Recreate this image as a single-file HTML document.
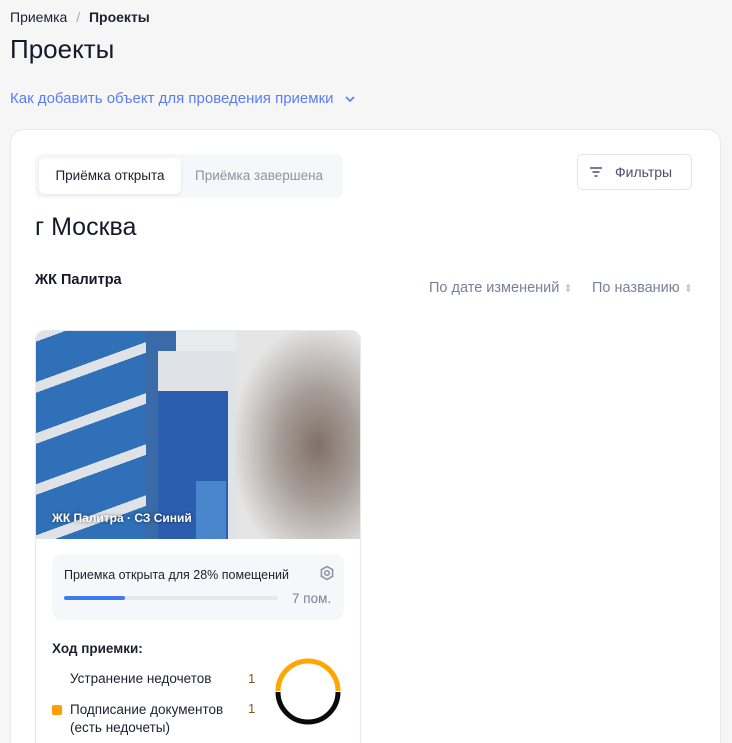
<!DOCTYPE html>
<html><head><meta charset="utf-8"><style>
*{box-sizing:border-box;margin:0;padding:0}
html,body{width:732px;height:743px;overflow:hidden}
body{background:#f6f6f7;font-family:"Liberation Sans","DejaVu Sans",sans-serif;color:#1c2030;position:relative}
.a{position:absolute;white-space:nowrap}
</style></head><body>
<div class="a" style="left:10px;top:9px;font-size:14px;color:#1c2030">Приемка <span style="color:#aab;margin:0 5px">/</span> <b>Проекты</b></div>
<div class="a" style="left:10px;top:34px;font-size:26px;color:#15192a">Проекты</div>
<div class="a" style="left:10px;top:90px;font-size:15px;color:#5b7cf5">Как добавить объект для проведения приемки <svg width="12" height="8" style="margin-left:6px" viewBox="0 0 12 8"><path d="M2 2l4 4 4-4" stroke="#5b7cf5" stroke-width="1.6" fill="none"/></svg></div>
<div class="a" style="left:10px;top:129px;width:711px;height:640px;background:#fff;border:1px solid #e8e9ef;border-radius:14px"></div>
<div class="a" style="left:35px;top:154px;width:308px;height:44px;background:#f6f7fb;border-radius:6px"></div>
<div class="a" style="left:39px;top:158px;width:142px;height:36px;background:#fff;border-radius:6px;box-shadow:0 1px 3px rgba(0,0,0,.08);font-size:13.5px;line-height:36px;text-align:center;color:#1c2030">Приёмка открыта</div>
<div class="a" style="left:195px;top:158px;line-height:36px;font-size:13.5px;color:#8f93a3">Приёмка завершена</div>
<div class="a" style="left:577px;top:154px;width:115px;height:36px;border:1px solid #e2e4ec;border-radius:5px;font-size:14px;line-height:34px;color:#4a5068;padding-left:37px">Фильтры</div>
<svg class="a" style="left:589px;top:166px" width="14" height="12" viewBox="0 0 14 12"><path d="M1 2h12M3.5 6h7M5.5 10h3" stroke="#4a5068" stroke-width="1.5"/></svg>
<div class="a" style="left:35px;top:213px;font-size:25px;color:#15192a">г Москва</div>
<div class="a" style="left:35px;top:272px;font-size:14.5px;font-weight:bold;color:#15192a">ЖК Палитра</div>
<div class="a" style="left:429px;top:280px;font-size:14.5px;color:#7a8098">По дате изменений <span style="color:#c9ccd8;font-size:11px">⬍</span></div>
<div class="a" style="left:592px;top:280px;font-size:14.5px;color:#7a8098">По названию <span style="color:#c9ccd8;font-size:11px">⬍</span></div>
<div class="a" style="left:35px;top:330px;width:326px;height:430px;border:1px solid #e6e8ef;border-radius:10px;overflow:hidden;background:#fff">
<div style="position:absolute;left:0;top:0;width:326px;height:208px;background:#e9eaec">
<div style="position:absolute;left:0;top:0;width:120px;height:208px;background:repeating-linear-gradient(160deg,#dfe2e6 0 10px,#2f70b8 10px 48px)"></div>
<div style="position:absolute;left:110px;top:0;width:30px;height:208px;background:#3a6aa8"></div>
<div style="position:absolute;left:122px;top:20px;width:80px;height:188px;background:#dfe2e6"></div>
<div style="position:absolute;left:122px;top:60px;width:70px;height:148px;background:#2c5eb0"></div>
<div style="position:absolute;left:160px;top:150px;width:30px;height:58px;background:#4a86cc"></div>
<div style="position:absolute;left:200px;top:0;width:126px;height:208px;background:radial-gradient(ellipse at 65% 55%,#6e5c50 0%,#9c918a 35%,#e4e4e4 75%);opacity:.85"></div>
<div style="position:absolute;left:16px;top:180px;font-size:12px;font-weight:bold;color:#fff;text-shadow:0 0 3px rgba(0,0,0,.6)">ЖК Палитра · СЗ Синий</div>
</div>
<div style="position:absolute;left:16px;top:223px;width:292px;height:66px;background:#f6f7fb;border-radius:10px"></div>
<div style="position:absolute;left:28px;top:237px;font-size:12.5px;color:#1c2030">Приемка открыта для 28% помещений</div>
<svg style="position:absolute;left:283px;top:234px" width="16" height="16" viewBox="0 0 16 16"><path d="M8 1.5l5.6 3.2v6.6L8 14.5l-5.6-3.2V4.7z" stroke="#8a90a6" stroke-width="1.5" fill="none"/><circle cx="8" cy="8" r="2.3" stroke="#8a90a6" stroke-width="1.5" fill="none"/></svg>
<div style="position:absolute;left:28px;top:265px;width:214px;height:4px;background:#e6e8ef;border-radius:2px"><div style="width:61px;height:4px;background:#3d7bf2;border-radius:2px"></div></div>
<div style="position:absolute;left:256px;top:260px;font-size:13.5px;color:#7a8098">7 пом.</div>
<div style="position:absolute;left:16px;top:310px;font-size:13.5px;font-weight:bold;color:#1c2030">Ход приемки:</div>
<div style="position:absolute;left:34px;top:340px;font-size:13.5px;color:#1c2030">Устранение недочетов</div>
<div style="position:absolute;left:212px;top:340px;font-size:13px;color:#7a5a20">1</div>
<div style="position:absolute;left:16px;top:374px;width:10px;height:10px;background:#ffa000;border-radius:2px"></div>
<div style="position:absolute;left:34px;top:370px;font-size:13.5px;line-height:18px;color:#1c2030">Подписание документов<br>(есть недочеты)</div>
<div style="position:absolute;left:212px;top:370px;font-size:13px;color:#7a5a20">1</div>
<svg style="position:absolute;left:238px;top:326px" width="68" height="68" viewBox="0 0 68 68"><path d="M4 34A30 30 0 0 1 64 34" stroke="#ffa600" stroke-width="5" fill="none"/><path d="M64 35A30 30 0 0 1 4 35" stroke="#0a0a0a" stroke-width="5" fill="none"/></svg>
</div>
</body></html>
